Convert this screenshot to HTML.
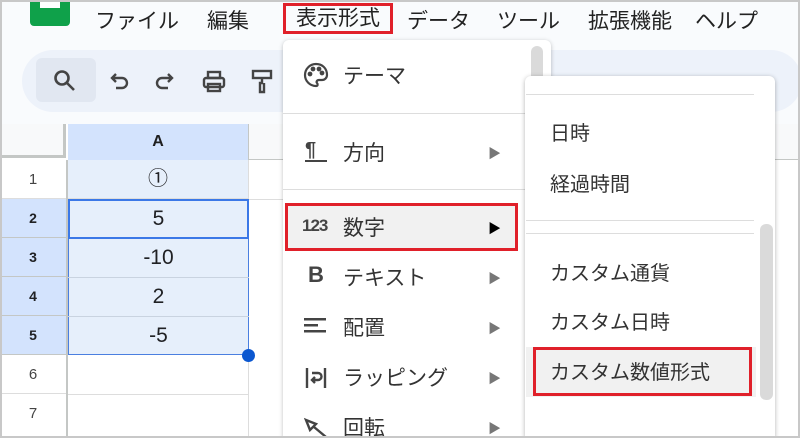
<!DOCTYPE html>
<html style="width:800px;height:438px;overflow:hidden"><head><meta charset="utf-8"><style>
*{margin:0;padding:0;box-sizing:border-box}
body{width:800px;height:438px;overflow:hidden;background:#f9fbfd;font-family:"Liberation Sans","Noto Sans CJK JP",sans-serif;position:relative;color:#202124}
.a{position:absolute}
.mb{top:5px;font-size:21px;color:#222}
.grid div{position:absolute}
.mi{position:absolute;left:0;font-size:21px;color:#333}
.arr{position:absolute;left:205px;font-size:13px;color:#777}
.hl{border:3px solid #e0202a}
</style></head><body>
<div class="a" style="left:0;top:0;width:800px;height:438px;border:2px solid #c8c8c8;z-index:50;pointer-events:none"></div>
<div class="a" style="left:30px;top:-4px;width:40px;height:30px;background:#0fa14a;border-radius:4px"></div>
<div class="a" style="left:40px;top:0;width:20px;height:8px;background:#fff"></div>
<div class="a mb" style="left:95px">ファイル</div>
<div class="a mb" style="left:207px">編集</div>
<div class="a mb hl" style="left:283px;top:3px;width:110px;height:31px;padding-left:10px;line-height:25px">表示形式</div>
<div class="a mb" style="left:407px">データ</div>
<div class="a mb" style="left:497px">ツール</div>
<div class="a mb" style="left:588px">拡張機能</div>
<div class="a mb" style="left:695px">ヘルプ</div>
<div class="a" style="left:0;top:50px;width:800px;height:74px;background:#f9fbfd"></div>
<div class="a" style="left:22px;top:50px;width:780px;height:62px;background:#edf2fa;border-radius:31px"></div>
<div class="a" style="left:36px;top:58px;width:60px;height:44px;background:#e1e7f1;border-radius:6px"></div>
<svg class="a" style="left:50px;top:66px" width="30" height="30" viewBox="0 0 30 30" fill="none" stroke="#444" stroke-width="2.6"><circle cx="12" cy="12" r="6.5"/><path d="M17 17l7 7"/></svg>
<svg class="a" style="left:104px;top:68px" width="28" height="28" viewBox="0 0 28 28" fill="none" stroke="#444" stroke-width="2.4"><path d="M8 10h10a5 5 0 010 10h-6M12 6L8 10l4 4"/></svg>
<svg class="a" style="left:152px;top:68px" width="28" height="28" viewBox="0 0 28 28" fill="none" stroke="#444" stroke-width="2.4"><path d="M20 10H10a5 5 0 000 10h6M16 6l4 4-4 4"/></svg>
<svg class="a" style="left:200px;top:68px" width="30" height="28" viewBox="0 0 30 28" fill="none" stroke="#444" stroke-width="2.4"><rect x="8" y="4" width="12" height="6"/><rect x="4" y="10" width="20" height="9" rx="2"/><rect x="8" y="16" width="12" height="7"/></svg>
<svg class="a" style="left:250px;top:68px" width="24" height="30" viewBox="0 0 24 30" fill="none" stroke="#444" stroke-width="2.4"><rect x="3" y="3" width="18" height="7"/><path d="M12 10v5h-2v9h4v-9"/></svg>
<div class="a" style="left:0;top:124px;width:800px;height:314px;background:#fff"></div>
<div class="a" style="left:0;top:124px;width:66px;height:34px;background:#f8f9fa;border-right:3px solid #c4c7c5;border-bottom:3px solid #c4c7c5"></div>
<div class="a" style="left:68px;top:124px;width:181px;height:36px;background:#d3e3fd;border-right:1px solid #c4c7c5;font-weight:bold;font-size:16px;text-align:center;line-height:36px;color:#1f1f1f">A</div>
<div class="a" style="left:249px;top:124px;width:560px;height:36px;background:#f8f9fa;border-bottom:1px solid #c4c7c5"></div>
<div class="a" style="left:66px;top:160px;width:2px;height:278px;background:#c4c7c5"></div>
<div class="grid">
<div style="left:0;top:160px;width:66px;height:39px;text-align:center;line-height:39px;font-size:15px;color:#444;border-bottom:1px solid #ddd">1</div>
<div style="left:0;top:199px;width:66px;height:39px;text-align:center;line-height:39px;font-size:14px;font-weight:bold;background:#d3e3fd;border-bottom:1px solid #c4c7c5">2</div>
<div style="left:0;top:238px;width:66px;height:39px;text-align:center;line-height:39px;font-size:14px;font-weight:bold;background:#d3e3fd;border-bottom:1px solid #c4c7c5">3</div>
<div style="left:0;top:277px;width:66px;height:39px;text-align:center;line-height:39px;font-size:14px;font-weight:bold;background:#d3e3fd;border-bottom:1px solid #c4c7c5">4</div>
<div style="left:0;top:316px;width:66px;height:39px;text-align:center;line-height:39px;font-size:14px;font-weight:bold;background:#d3e3fd;border-bottom:1px solid #c4c7c5">5</div>
<div style="left:0;top:355px;width:66px;height:39px;text-align:center;line-height:39px;font-size:15px;color:#444;border-bottom:1px solid #ddd">6</div>
<div style="left:0;top:394px;width:66px;height:39px;text-align:center;line-height:39px;font-size:15px;color:#444">7</div>
<div style="left:68px;top:160px;width:181px;height:39px;background:#e6effb;text-align:center;line-height:39px;font-size:20px;border-bottom:1px solid #ddd;border-right:1px solid #ddd">①</div>
<div style="left:68px;top:199px;width:181px;height:156px;background:#e6effb;border:1px solid #4a7fe0"></div>
<div style="left:68px;top:238px;width:181px;height:1px;background:#c9d3e0"></div>
<div style="left:68px;top:277px;width:181px;height:1px;background:#c9d3e0"></div>
<div style="left:68px;top:316px;width:181px;height:1px;background:#c9d3e0"></div>
<div style="left:68px;top:199px;width:181px;height:40px;border:2px solid #3b78e7;text-align:center;line-height:36px;font-size:21px">5</div>
<div style="left:68px;top:238px;width:181px;height:39px;text-align:center;line-height:39px;font-size:21px">-10</div>
<div style="left:68px;top:277px;width:181px;height:39px;text-align:center;line-height:39px;font-size:21px">2</div>
<div style="left:68px;top:316px;width:181px;height:39px;text-align:center;line-height:39px;font-size:21px">-5</div>
<div style="left:68px;top:394px;width:181px;height:1px;background:#ddd"></div>
<div style="left:248px;top:355px;width:1px;height:83px;background:#ddd"></div>
<div style="left:242px;top:349px;width:13px;height:13px;border-radius:50%;background:#0b57d0"></div>
<div style="left:249px;top:199px;width:40px;height:1px;background:#ddd"></div>
</div>
<div class="a" style="left:283px;top:40px;width:268px;height:398px;background:#fff;border-radius:6px 6px 0 0;box-shadow:0 1px 4px rgba(0,0,0,.25)">
<div class="a" style="left:248px;top:6px;width:12px;height:50px;background:#dadada;border-radius:6px"></div>
<svg class="a" style="left:20px;top:22px" width="26" height="26" viewBox="0 0 26 26" fill="none" stroke="#444" stroke-width="2.2"><path d="M13 2a11 11 0 000 22c2 0 2-2 1-3s0-3 2-3h3a5 5 0 005-5C24 6 19 2 13 2z"/><circle cx="7" cy="12" r="1.3" fill="#444"/><circle cx="10" cy="7" r="1.3" fill="#444"/><circle cx="16" cy="7" r="1.3" fill="#444"/><circle cx="19" cy="11" r="1.3" fill="#444"/></svg>
<div class="mi" style="left:60px;top:20px">テーマ</div>
<div class="a" style="left:0;top:73px;width:268px;height:1px;background:#ddd"></div>
<div class="a" style="left:22px;top:99px;font-size:20px;font-weight:bold;color:#444">¶</div>
<div class="a" style="left:22px;top:120px;width:22px;height:2px;background:#444"></div>
<div class="mi" style="left:60px;top:97px">方向</div>
<div class="arr" style="top:103px">▶</div>
<div class="a" style="left:0;top:149px;width:268px;height:1px;background:#ddd"></div>
<div class="a hl" style="left:2px;top:163px;width:233px;height:48px;background:#f1f1f1"></div>
<div class="a" style="left:19px;top:176px;font-size:17px;font-weight:bold;color:#444;letter-spacing:-1px">123</div>
<div class="mi" style="left:60px;top:172px">数字</div>
<div class="arr" style="top:178px;color:#000">▶</div>
<div class="a" style="left:25px;top:222px;font-size:22px;font-weight:bold;color:#444">B</div>
<div class="mi" style="left:60px;top:222px">テキスト</div>
<div class="arr" style="top:228px">▶</div>
<svg class="a" style="left:20px;top:276px" width="24" height="20" viewBox="0 0 24 20" fill="#444"><rect x="1" y="2" width="22" height="2.5"/><rect x="1" y="8" width="14" height="2.5"/><rect x="1" y="14" width="22" height="2.5"/></svg>
<div class="mi" style="left:60px;top:272px">配置</div>
<div class="arr" style="top:278px">▶</div>
<svg class="a" style="left:21px;top:326px" width="24" height="24" viewBox="0 0 24 24" fill="none" stroke="#444" stroke-width="2.4"><path d="M3 2v20M21 2v20M8 7h6a3 3 0 010 7H9M11 11l-3 3 3 3"/></svg>
<div class="mi" style="left:60px;top:322px">ラッピング</div>
<div class="arr" style="top:328px">▶</div>
<svg class="a" style="left:21px;top:377px" width="26" height="24" viewBox="0 0 26 24" fill="none" stroke="#444" stroke-width="2.4"><path d="M2 3l10 4-6 6zM10 10l12 10"/></svg>
<div class="mi" style="left:60px;top:372px">回転</div>
<div class="arr" style="top:378px">▶</div>
</div>
<div class="a" style="left:525px;top:76px;width:250px;height:362px;background:#fff;border-radius:6px 6px 0 0;box-shadow:0 1px 5px rgba(0,0,0,.3)">
<div class="a" style="left:1px;top:18px;width:228px;height:1px;background:#ddd"></div>
<div class="mi" style="left:25px;top:41px;font-size:20px">日時</div>
<div class="mi" style="left:25px;top:92px;font-size:20px">経過時間</div>
<div class="a" style="left:1px;top:144px;width:228px;height:1px;background:#ddd"></div>
<div class="a" style="left:1px;top:157px;width:228px;height:1px;background:#ddd"></div>
<div class="a" style="left:235px;top:148px;width:13px;height:176px;background:#dadada;border-radius:6px"></div>
<div class="mi" style="left:25px;top:181px;font-size:20px">カスタム通貨</div>
<div class="mi" style="left:25px;top:230px;font-size:20px">カスタム日時</div>
<div class="a" style="left:1px;top:271px;width:230px;height:50px;background:#f1f1f1"></div>
<div class="a hl" style="left:8px;top:271px;width:219px;height:49px"></div>
<div class="mi" style="left:25px;top:280px;font-size:20px">カスタム数値形式</div>
</div>
</body></html>
